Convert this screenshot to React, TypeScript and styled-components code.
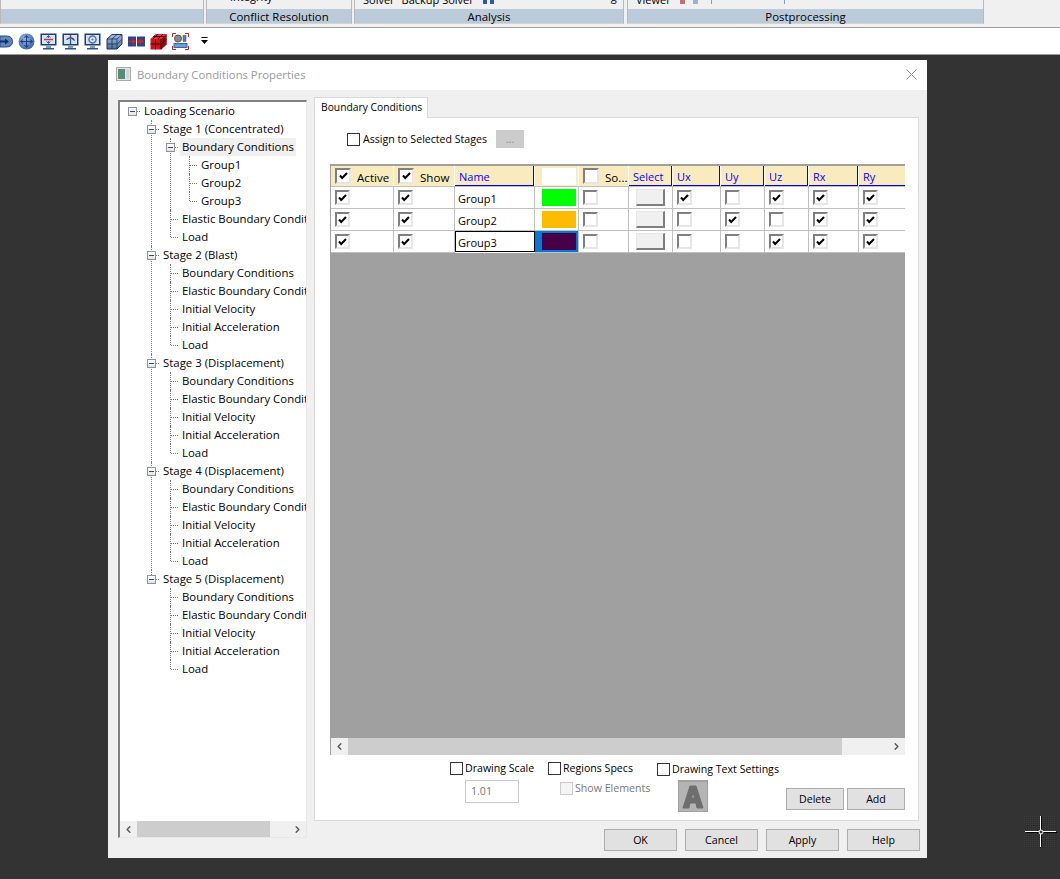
import React from 'react';
import styled, { createGlobalStyle } from 'styled-components';
import { ChevronLeft, ChevronRight } from 'lucide-react';

const GlobalStyle = createGlobalStyle`
  html, body {
    margin: 0;
    padding: 0;
    background: #333333;
    font-family: "Open Sans", "Noto Sans", sans-serif;
    font-size: 10.6px;
    color: #000;
  }
`;

const Page = styled.div`
  position: relative;
  width: 1060px;
  height: 879px;
  overflow: hidden;
  display: flex;
  flex-direction: column;
  background: #333333;
`;

const Ribbon = styled.header`
  height: 27px;
  flex: none;
  display: flex;
  background: #f0f0f0;
  border-bottom: 1px solid #a0a0a0;
`;

const RibbonGroup = styled.div<{ $w: number; $gap?: number }>`
  width: ${(p) => p.$w}px;
  margin-right: ${(p) => p.$gap ?? 0}px;
  height: 24px;
  flex: none;
  display: flex;
  flex-direction: column;
  box-sizing: border-box;
  border-left: 1px solid #b8b8b8;
  border-right: 1px solid #b8b8b8;
  border-bottom: 1px solid #d4d4d4;
`;

const RibbonBody = styled.div`
  height: 9px;
  flex: none;
  overflow: hidden;
  display: flex;
  align-items: flex-end;
`;

const RibbonText = styled.span<{ $left: number; $lift?: number }>`
  margin-left: ${(p) => p.$left}px;
  margin-bottom: ${(p) => p.$lift ?? 2}px;
  font-size: 11px;
  line-height: 14px;
  flex: none;
  white-space: nowrap;
`;

const RibbonMark = styled.span<{ $left: number; $c: string; $w?: number }>`
  margin-left: ${(p) => p.$left}px;
  margin-bottom: 5px;
  width: ${(p) => p.$w ?? 5}px;
  height: 4px;
  flex: none;
  background: ${(p) => p.$c};
`;

const RibbonCaption = styled.div`
  height: 14px;
  line-height: 15px;
  background: #bccbd9;
  text-align: center;
  font-size: 11.4px;
`;

const Toolbar = styled.div`
  height: 26px;
  flex: none;
  display: flex;
  align-items: center;
  gap: 5px;
  background: #fff;
  border-bottom: 1px solid #999;
`;

const Workspace = styled.main`
  flex: 1;
  padding: 5px 0 0 108px;
`;

const Dialog = styled.section`
  width: 819px;
  height: 798px;
  display: flex;
  flex-direction: column;
  background: #f0f0f0;
`;

const TitleBar = styled.div`
  height: 30px;
  flex: none;
  box-sizing: border-box;
  display: flex;
  align-items: center;
  gap: 6px;
  padding: 0 10px 2px 8px;
  background: #fff;
  color: #999;
  font-size: 11.3px;
`;

const TitleText = styled.span`
  flex: 1;
`;

const DialogBody = styled.div`
  display: flex;
  gap: 7px;
  padding: 10px 7px 0 10px;
`;

const TreePanel = styled.div`
  width: 189px;
  height: 738px;
  flex: none;
  box-sizing: border-box;
  display: flex;
  flex-direction: column;
  background: #fff;
  border: 1px solid #e8e8e8;
  border-top: 2px solid #808080;
  border-left: 2px solid #808080;
`;

const TreeScroll = styled.div`
  flex: 1;
  overflow: hidden;
  font-size: 11.4px;
`;

const Node = styled.div<{ $x: number; $last: boolean; $hide?: boolean }>`
  position: relative;
  &::before {
    content: '';
    display: ${(p) => (p.$hide ? 'none' : 'block')};
    position: absolute;
    left: ${(p) => p.$x}px;
    top: 0;
    ${(p) => (p.$last ? 'height: 9px;' : 'bottom: 0;')}
    border-left: 1px dotted #777;
  }
`;

const NodeRow = styled.div<{ $pad: number }>`
  height: 18px;
  display: flex;
  align-items: center;
  padding-left: ${(p) => p.$pad}px;
  white-space: nowrap;
`;

const Expander = styled.span`
  position: relative;
  width: 9px;
  height: 9px;
  flex: none;
  box-sizing: border-box;
  border: 1px solid #919191;
  background: linear-gradient(#fff, #e4e4e4);
  z-index: 1;
  &::after {
    content: '';
    position: absolute;
    left: 1px;
    right: 1px;
    top: 3px;
    height: 1px;
    background: #2a4a8c;
  }
`;

const Dots = styled.span<{ $w: number }>`
  width: ${(p) => p.$w}px;
  flex: none;
  margin-right: 2px;
  border-top: 1px dotted #777;
`;

const NodeLabel = styled.span<{ $selected?: boolean }>`
  height: 18px;
  line-height: 18px;
  padding: 0 2px;
  background: ${(p) => (p.$selected ? '#f0f0f0' : 'transparent')};
`;

const Scrollbar = styled.div<{ $h?: number }>`
  flex: none;
  height: ${(p) => p.$h ?? 16}px;
  display: flex;
  align-items: center;
  background: #f0f0f0;
  color: #555;
`;

const ScrollTrack = styled.div`
  flex: 1;
  height: 100%;
  display: flex;
`;

const ScrollThumb = styled.div<{ $w: number }>`
  height: 100%;
  width: ${(p) => p.$w}px;
  background: #cdcdcd;
`;

const ArrowBox = styled.span`
  width: 17px;
  flex: none;
  display: flex;
  justify-content: center;
`;

const RightColumn = styled.div`
  width: 606px;
  flex: none;
  display: flex;
  flex-direction: column;
`;

const Tab = styled.div`
  position: relative;
  z-index: 1;
  width: 114px;
  height: 21px;
  box-sizing: border-box;
  background: #fff;
  border: 1px solid #d9d9d9;
  border-bottom: none;
  padding: 0 6px;
  line-height: 19px;
  margin: -3px 0 -1px;
  font-size: 10.3px;
  white-space: nowrap;
`;

const TabPage = styled.div`
  width: 605px;
  height: 704px;
  box-sizing: border-box;
  background: #fff;
  border: 1px solid #d9d9d9;
  padding: 0 13px 0 15px;
  display: flex;
  flex-direction: column;
`;

const AssignRow = styled.div`
  height: 46px;
  flex: none;
  display: flex;
  align-items: center;
  padding: 0 0 4px 17px;
  box-sizing: border-box;
  gap: 3px;
`;

const PlainBox = styled.span`
  width: 13px;
  height: 13px;
  flex: none;
  box-sizing: border-box;
  border: 1px solid #333;
  background: #fff;
`;

const DotsButton = styled.span`
  width: 28px;
  height: 18px;
  margin-left: 6px;
  background: #cccccc;
  color: #8a8a8a;
  text-align: center;
  line-height: 18px;
`;

const GridFrame = styled.div`
  width: 575px;
  height: 591px;
  flex: none;
  box-sizing: border-box;
  border-top: 2px solid #a0a0a0;
  border-left: 1px solid #a0a0a0;
  display: flex;
  flex-direction: column;
  font-size: 11px;
`;

const COLUMNS = '63px 61px 80px 44px 50px 44px 48px 44px 44px 50px 46px';

const GridRow = styled.div<{ $h?: number }>`
  display: grid;
  grid-template-columns: ${COLUMNS};
  height: ${(p) => p.$h ?? 22}px;
  flex: none;
`;

const HeadRow = styled(GridRow)`
  background: #fff;
  border-bottom: 1px solid #c0c0c0;
  box-sizing: border-box;
`;

const HeadCell = styled.div<{ $blue?: boolean; $open?: boolean }>`
  display: flex;
  align-items: center;
  gap: 6px;
  padding-left: 4px;
  box-sizing: border-box;
  background: #f9ebbe;
  margin-right: ${(p) => (p.$open ? 0 : 1)}px;
  overflow: hidden;
  white-space: nowrap;
  ${(p) =>
    p.$blue
      ? `color: #0000ff;
         padding-top: 2px;
         border-bottom: 1px solid #0000e0;
         border-right: ${p.$open ? 'none' : '1px solid #0000e0'};`
      : ''}
`;

const HeadLabel = styled.span`
  padding-top: 2px;
  font-size: 11.6px;
`;

const ColorHeadBox = styled.span`
  width: 34px;
  height: 17px;
  margin-left: 3px;
  flex: none;
  background: #fff;
`;

const Cell = styled.div<{ $center?: boolean; $end?: boolean }>`
  display: flex;
  align-items: center;
  justify-content: ${(p) => (p.$center ? 'center' : 'flex-start')};
  padding-left: ${(p) => (p.$center ? 0 : 4)}px;
  box-sizing: border-box;
  border-right: ${(p) => (p.$end ? 'none' : '1px solid #c0c0c0')};
  border-bottom: 1px solid #c0c0c0;
  background: #fff;
`;

const NameCell = styled(Cell)<{ $focus?: boolean }>`
  padding: 2px 0 0 3px;
  ${(p) => (p.$focus ? 'border: 1px solid #000; padding: 2px 0 0 2px; margin: 0 0 1px 0;' : '')}
`;

const ColorCell = styled(Cell)<{ $focus?: boolean }>`
  padding-left: 7px;
  background: ${(p) => (p.$focus ? '#0078d7' : '#fff')};
`;

const Swatch = styled.span<{ $c: string }>`
  width: 34px;
  height: 17px;
  background: ${(p) => p.$c};
`;

const SelectButton = styled.span`
  width: 29px;
  height: 17px;
  box-sizing: border-box;
  background: #f0f0f0;
  border: 1px solid #e6e6e6;
  border-right: 2px solid #7f7f7f;
  border-bottom: 2px solid #7f7f7f;
`;

const CheckBox = styled.span<{ $head?: boolean }>`
  width: ${(p) => (p.$head ? 16 : 15)}px;
  height: ${(p) => (p.$head ? 16 : 15)}px;
  flex: none;
  box-sizing: border-box;
  background: #fff;
  border: 2px solid #e6e6e6;
  border-top-color: #808080;
  border-left-color: #808080;
  display: flex;
  align-items: center;
  justify-content: center;
`;

const GrayArea = styled.div`
  flex: 1;
  background: #a0a0a0;
`;

const BottomControls = styled.div`
  flex: 1;
  display: flex;
`;

const OptionColumn = styled.div<{ $w: number; $left?: number; $top?: number; $gap?: number }>`
  width: ${(p) => p.$w}px;
  flex: none;
  margin-left: ${(p) => p.$left ?? 0}px;
  display: flex;
  flex-direction: column;
  padding-top: ${(p) => p.$top ?? 5}px;
  gap: ${(p) => p.$gap ?? 4}px;
`;

const OptionLabel = styled.label`
  display: flex;
  align-items: center;
  gap: 2px;
  height: 16px;
  white-space: nowrap;
`;

const ScaleInput = styled.div`
  width: 54px;
  height: 23px;
  margin-left: 15px;
  box-sizing: border-box;
  border: 1px solid #c8c8c8;
  padding-left: 5px;
  line-height: 21px;
  color: #777;
`;

const MutedOption = styled(OptionLabel)`
  color: #777;
  margin-left: 12px;
`;

const MutedBox = styled(PlainBox)`
  border-color: #ccc;
  background: #f4f4f4;
`;

const FontButton = styled.div`
  width: 30px;
  height: 32px;
  margin-left: 21px;
  box-sizing: border-box;
  background: #b4b4b4;
  border: 1px solid #a0a0a0;
  border-top-width: 2px;
  display: flex;
  align-items: center;
  justify-content: center;
`;

const Btn = styled.button<{ $w: number }>`
  width: ${(p) => p.$w}px;
  height: 22px;
  padding: 0;
  box-sizing: border-box;
  background: #e1e1e1;
  border: 1px solid #adadad;
  font: inherit;
  color: #000;
`;

const SideButtons = styled.div`
  display: flex;
  gap: 3px;
  margin-left: 6px;
  padding-top: 33px;
`;

const DialogFooter = styled.footer`
  display: flex;
  justify-content: flex-end;
  gap: 8px;
  padding-top: 8px;
`;

const Crosshair = styled.svg`
  position: absolute;
  left: 1024px;
  top: 816px;
`;

type TreeItem = { label: string; selected?: boolean; children?: TreeItem[] };

const extras = ['Boundary Conditions', 'Elastic Boundary Conditions', 'Initial Velocity', 'Initial Acceleration', 'Load'];
const stage = (label: string): TreeItem => ({ label, children: extras.map((l) => ({ label: l })) });

const tree: TreeItem = {
  label: 'Loading Scenario',
  children: [
    {
      label: 'Stage 1 (Concentrated)',
      children: [
        {
          label: 'Boundary Conditions',
          selected: true,
          children: [{ label: 'Group1' }, { label: 'Group2' }, { label: 'Group3' }],
        },
        { label: 'Elastic Boundary Conditions' },
        { label: 'Load' },
      ],
    },
    stage('Stage 2 (Blast)'),
    stage('Stage 3 (Displacement)'),
    stage('Stage 4 (Displacement)'),
    stage('Stage 5 (Displacement)'),
  ],
};

function TreeNode({ item, depth, last }: { item: TreeItem; depth: number; last: boolean }) {
  const lineX = 12 + depth * 19;
  return (
    <Node $x={lineX} $last={last} $hide={depth === 0}>
      <NodeRow $pad={item.children ? lineX - 4 : lineX + 1}>
        {item.children ? <Expander /> : <Dots $w={7} />}
        {item.children && <Dots $w={3} />}
        <NodeLabel $selected={item.selected}>{item.label}</NodeLabel>
      </NodeRow>
      {item.children?.map((c, i) => (
        <TreeNode key={c.label + i} item={c} depth={depth + 1} last={i === item.children!.length - 1} />
      ))}
    </Node>
  );
}

function Check({ on = true, head = false }: { on?: boolean; head?: boolean }) {
  return (
    <CheckBox $head={head}>
      {on && (
        <svg width="9" height="8" viewBox="0 0 9 8">
          <path d="M1 3.5 L3.2 6 L8 1" fill="none" stroke="#000" strokeWidth="2" />
        </svg>
      )}
    </CheckBox>
  );
}

const rows = [
  { name: 'Group1', color: '#00ff00', checks: [true, false, true, true, true] },
  { name: 'Group2', color: '#ffbb00', checks: [false, true, false, true, true] },
  { name: 'Group3', color: '#470047', checks: [false, false, true, true, true] },
];

function Monitor({ children }: { children: React.ReactNode }) {
  return (
    <svg width="17" height="17" viewBox="0 0 17 17">
      <rect x="0.5" y="0.5" width="16" height="12" fill="#1f3f73" />
      <rect x="2" y="2" width="13" height="9" fill="#d5e3f4" />
      <rect x="6" y="13" width="5" height="2" fill="#7d9cc4" />
      <rect x="3" y="15" width="11" height="1.5" fill="#2f5488" />
      {children}
    </svg>
  );
}

function ToolbarIcons() {
  return (
    <>
      <svg width="13" height="17" viewBox="0 0 13 17">
        <path d="M0 3 H6 Q12.5 3 12.5 8.5 Q12.5 14 6 14 H0 Z" fill="#5f86bd" stroke="#2c4d85" />
        <path d="M0 8.5 H7" stroke="#14305f" strokeWidth="2" />
        <path d="M5 5.5 L9 8.5 L5 11.5 Z" fill="#14305f" />
      </svg>
      <svg width="17" height="17" viewBox="0 0 17 17">
        <defs>
          <radialGradient id="globe" cx="0.4" cy="0.35" r="0.7">
            <stop offset="0" stopColor="#8fb2e6" />
            <stop offset="1" stopColor="#3c62ab" />
          </radialGradient>
        </defs>
        <circle cx="8.5" cy="8.5" r="8" fill="url(#globe)" />
        <path d="M8.5 3 V14 M3 8.5 H14" stroke="#1d3f80" />
        <path d="M6.5 5 L8.5 2.5 L10.5 5 M6.5 12 L8.5 14.5 L10.5 12 M5 6.5 L2.5 8.5 L5 10.5 M12 6.5 L14.5 8.5 L12 10.5" stroke="#1d3f80" fill="none" />
      </svg>
      <Monitor>
        <path d="M4 6.5 H13" stroke="#d0342c" strokeWidth="1.4" />
        <path d="M8.5 3 V5 M8.5 8 V10" stroke="#35629e" strokeWidth="1.4" />
        <path d="M6.5 4.5 L8.5 2.5 L10.5 4.5 M6.5 8.5 L8.5 10.5 L10.5 8.5" stroke="#35629e" fill="none" />
      </Monitor>
      <Monitor>
        <path d="M8.5 2 V5" stroke="#d0342c" strokeWidth="1.4" />
        <path d="M5 7 A3.5 2 0 1 1 12 7 L10.5 6" stroke="#2f5488" strokeWidth="1.3" fill="none" />
        <path d="M8.5 6 V11" stroke="#2f5488" strokeWidth="1.3" />
      </Monitor>
      <Monitor>
        <circle cx="8.5" cy="6.5" r="3.5" fill="none" stroke="#4d74a8" strokeWidth="1.5" />
        <circle cx="8.5" cy="6.5" r="1" fill="#4d74a8" />
      </Monitor>
      <svg width="17" height="17" viewBox="0 0 17 17">
        <defs>
          <linearGradient id="blueFace" x1="0" y1="0" x2="0" y2="1">
            <stop offset="0" stopColor="#a8c3e2" />
            <stop offset="1" stopColor="#4a6e9e" />
          </linearGradient>
        </defs>
        <path d="M1 6 L6 1.5 H16 V11 L11 16 H1 Z" fill="url(#blueFace)" stroke="#1d3557" />
        <path d="M1 6 H11 V16 M11 6 L16 1.5 M6 6 V16 M1 11 H11 M6 6 L11 1.5 M11 11 L16 6.5" stroke="#1d3557" fill="none" strokeWidth="0.8" />
      </svg>
      <svg width="17" height="17" viewBox="0 0 17 17">
        <rect x="0" y="3.5" width="8" height="10" fill="#28458f" />
        <rect x="9" y="3.5" width="8" height="10" fill="#28458f" />
        <path d="M1 8.5 H5" stroke="#e02020" strokeWidth="1.6" />
        <path d="M4 5.5 L8 8.5 L4 11.5 Z" fill="#e02020" />
        <path d="M16 8.5 H12" stroke="#e02020" strokeWidth="1.6" />
        <path d="M13 5.5 L9 8.5 L13 11.5 Z" fill="#e02020" />
      </svg>
      <svg width="17" height="17" viewBox="0 0 17 17">
        <path d="M0.5 6 L6 1 H16.5 V11.5 L11 16.5 H0.5 Z" fill="#c8141a" />
        <path d="M11 6 L16.5 1 V11.5 L11 16.5 Z" fill="#8c0c10" />
        <path d="M0.5 6 L6 1 H16.5 L11 6 Z" fill="#e0353a" />
        <path d="M0.5 11 H11 M5.5 6 V16.5 M11 11.5 L16.5 6.5 M3 3.5 H13.5 M11 6 V16.5 M8 1 L3 6 M13 1 L8 6" stroke="#3a0608" fill="none" strokeWidth="0.9" />
      </svg>
      <svg width="17" height="17" viewBox="0 0 17 17">
        <path d="M0.5 4 V0.5 H4 M13 0.5 H16.5 V4 M0.5 13 V16.5 H4 M13 16.5 H16.5 V13" stroke="#d02020" fill="none" />
        <circle cx="6" cy="5.5" r="3.5" fill="#8a8a8a" stroke="#555" />
        <rect x="11" y="2.5" width="3" height="6" fill="#5f7fa8" stroke="#444" strokeWidth="0.5" />
        <rect x="2" y="10.5" width="13" height="4" fill="#6d9bd8" stroke="#3a66a0" />
      </svg>
      <svg width="7" height="8" viewBox="0 0 7 8" style={{ marginLeft: 7 }}>
        <path d="M0.5 0.5 H6.5" stroke="#000" />
        <path d="M0 3 H7 L3.5 7 Z" fill="#000" />
      </svg>
    </>
  );
}

export default function App() {
  return (
    <Page>
      <GlobalStyle />
      <Ribbon>
        <RibbonGroup $w={204} $gap={2}>
          <RibbonBody />
          <RibbonCaption>&nbsp;</RibbonCaption>
        </RibbonGroup>
        <RibbonGroup $w={146} $gap={2}>
          <RibbonBody>
            <svg width="15" height="9" viewBox="0 0 15 9" style={{ marginLeft: 6, flex: 'none', marginBottom: 5 }}>
              <path d="M4 -3 H11 L15 4 H0 Z" fill="#ffc400" stroke="#6a4a00" />
            </svg>
            <RibbonText $left={2} $lift={5}>
              Integrity
            </RibbonText>
          </RibbonBody>
          <RibbonCaption>Conflict Resolution</RibbonCaption>
        </RibbonGroup>
        <RibbonGroup $w={270} $gap={3}>
          <RibbonBody>
            <RibbonText $left={8}>Solver</RibbonText>
            <RibbonText $left={7}>Backup Solver</RibbonText>
            <RibbonMark $left={9} $c="#2c5aa0" $w={4} />
            <RibbonMark $left={3} $c="#2c5aa0" $w={4} />
            <RibbonText $left={117} $lift={5}>
              g
            </RibbonText>
          </RibbonBody>
          <RibbonCaption>Analysis</RibbonCaption>
        </RibbonGroup>
        <RibbonGroup $w={357}>
          <RibbonBody>
            <RibbonText $left={8}>Viewer</RibbonText>
            <RibbonMark $left={9} $c="#c07070" />
            <RibbonMark $left={8} $c="#a0b0d0" />
            <RibbonMark $left={13} $c="#8a9ab8" $w={1} />
            <RibbonMark $left={72} $c="#8a9ab8" $w={1} />
          </RibbonBody>
          <RibbonCaption>Postprocessing</RibbonCaption>
        </RibbonGroup>
      </Ribbon>
      <Toolbar>
        <ToolbarIcons />
      </Toolbar>
      <Workspace>
        <Dialog>
          <TitleBar>
            <svg width="15" height="14" viewBox="0 0 15 14">
              <rect x="0.5" y="0.5" width="14" height="13" fill="#e6e6e6" stroke="#aaa" />
              <rect x="2" y="2" width="7" height="10" fill="#5c8a78" />
              <rect x="10" y="2" width="3" height="10" fill="#cfd6dd" />
            </svg>
            <TitleText>Boundary Conditions Properties</TitleText>
            <svg width="11" height="11" viewBox="0 0 11 11">
              <path d="M0.5 0.5 L10.5 10.5 M10.5 0.5 L0.5 10.5" stroke="#8a8a8a" fill="none" />
            </svg>
          </TitleBar>
          <DialogBody>
            <TreePanel>
              <TreeScroll>
                <TreeNode item={tree} depth={0} last />
              </TreeScroll>
              <Scrollbar>
                <ArrowBox>
                  <ChevronLeft size={11} strokeWidth={3} />
                </ArrowBox>
                <ScrollTrack>
                  <ScrollThumb $w={133} />
                </ScrollTrack>
                <ArrowBox>
                  <ChevronRight size={11} strokeWidth={3} />
                </ArrowBox>
              </Scrollbar>
            </TreePanel>
            <RightColumn>
              <Tab>Boundary Conditions</Tab>
              <TabPage>
                <AssignRow>
                  <PlainBox />
                  Assign to Selected Stages
                  <DotsButton>...</DotsButton>
                </AssignRow>
                <GridFrame>
                  <HeadRow $h={21}>
                    <HeadCell>
                      <Check head />
                      <HeadLabel>Active</HeadLabel>
                    </HeadCell>
                    <HeadCell>
                      <Check head />
                      <HeadLabel>Show</HeadLabel>
                    </HeadCell>
                    <HeadCell $blue>Name</HeadCell>
                    <HeadCell>
                      <ColorHeadBox />.
                    </HeadCell>
                    <HeadCell>
                      <Check head on={false} />
                      <HeadLabel>So...</HeadLabel>
                    </HeadCell>
                    <HeadCell $blue>Select</HeadCell>
                    <HeadCell $blue>Ux</HeadCell>
                    <HeadCell $blue>Uy</HeadCell>
                    <HeadCell $blue>Uz</HeadCell>
                    <HeadCell $blue>Rx</HeadCell>
                    <HeadCell $blue $open>
                      Ry
                    </HeadCell>
                  </HeadRow>
                  {rows.map((r, i) => (
                    <GridRow key={r.name}>
                      <Cell>
                        <Check />
                      </Cell>
                      <Cell>
                        <Check />
                      </Cell>
                      <NameCell $focus={i === 2}>{r.name}</NameCell>
                      <ColorCell $focus={i === 2}>
                        <Swatch $c={r.color} />
                      </ColorCell>
                      <Cell>
                        <Check on={false} />
                      </Cell>
                      <Cell $center>
                        <SelectButton />
                      </Cell>
                      {r.checks.map((on, j) => (
                        <Cell key={j} $end={j === r.checks.length - 1}>
                          <Check on={on} />
                        </Cell>
                      ))}
                    </GridRow>
                  ))}
                  <GrayArea />
                  <Scrollbar $h={17}>
                    <ArrowBox>
                      <ChevronLeft size={11} strokeWidth={3} />
                    </ArrowBox>
                    <ScrollTrack>
                      <ScrollThumb $w={494} />
                    </ScrollTrack>
                    <ArrowBox>
                      <ChevronRight size={11} strokeWidth={3} />
                    </ArrowBox>
                  </Scrollbar>
                </GridFrame>
                <BottomControls>
                  <OptionColumn $w={98} $left={120}>
                    <OptionLabel>
                      <PlainBox />
                      Drawing Scale
                    </OptionLabel>
                    <ScaleInput>1.01</ScaleInput>
                  </OptionColumn>
                  <OptionColumn $w={109}>
                    <OptionLabel>
                      <PlainBox />
                      Regions Specs
                    </OptionLabel>
                    <MutedOption>
                      <MutedBox />
                      Show Elements
                    </MutedOption>
                  </OptionColumn>
                  <OptionColumn $w={123} $top={6} $gap={3}>
                    <OptionLabel>
                      <PlainBox />
                      Drawing Text Settings
                    </OptionLabel>
                    <FontButton>
                      <svg width="22" height="26" viewBox="0 0 22 26">
                        <path d="M8 2 H14 L21 24 H15 L14 19 H8 L7 24 H1 Z M9.5 14 H12.5 L11 8 Z" fill="#6e6e6e" fillRule="evenodd" stroke="#6e6e6e" strokeLinejoin="round" />
                      </svg>
                    </FontButton>
                  </OptionColumn>
                  <SideButtons>
                    <Btn $w={58}>Delete</Btn>
                    <Btn $w={58}>Add</Btn>
                  </SideButtons>
                </BottomControls>
              </TabPage>
              <DialogFooter>
                <Btn $w={73}>OK</Btn>
                <Btn $w={73}>Cancel</Btn>
                <Btn $w={73}>Apply</Btn>
                <Btn $w={73}>Help</Btn>
              </DialogFooter>
            </RightColumn>
          </DialogBody>
        </Dialog>
      </Workspace>
      <Crosshair width="33" height="33" viewBox="0 0 33 33">
        <defs>
          <pattern id="halftone" width="2" height="2" patternUnits="userSpaceOnUse">
            <rect width="1" height="1" fill="#3c3c3c" />
            <rect x="1" y="1" width="1" height="1" fill="#2c2c2c" />
          </pattern>
        </defs>
        <rect x="0" y="0" width="32" height="32" fill="url(#halftone)" />
        <path d="M1 16.5 H32 M16.5 0 V31" stroke="#000" strokeWidth="1" transform="translate(1 0)" />
        <path d="M1 15.5 H32 M16.5 0 V31" stroke="#fff" strokeWidth="1" />
        <circle cx="17" cy="16" r="2" fill="#333" stroke="#fff" />
      </Crosshair>
    </Page>
  );
}
